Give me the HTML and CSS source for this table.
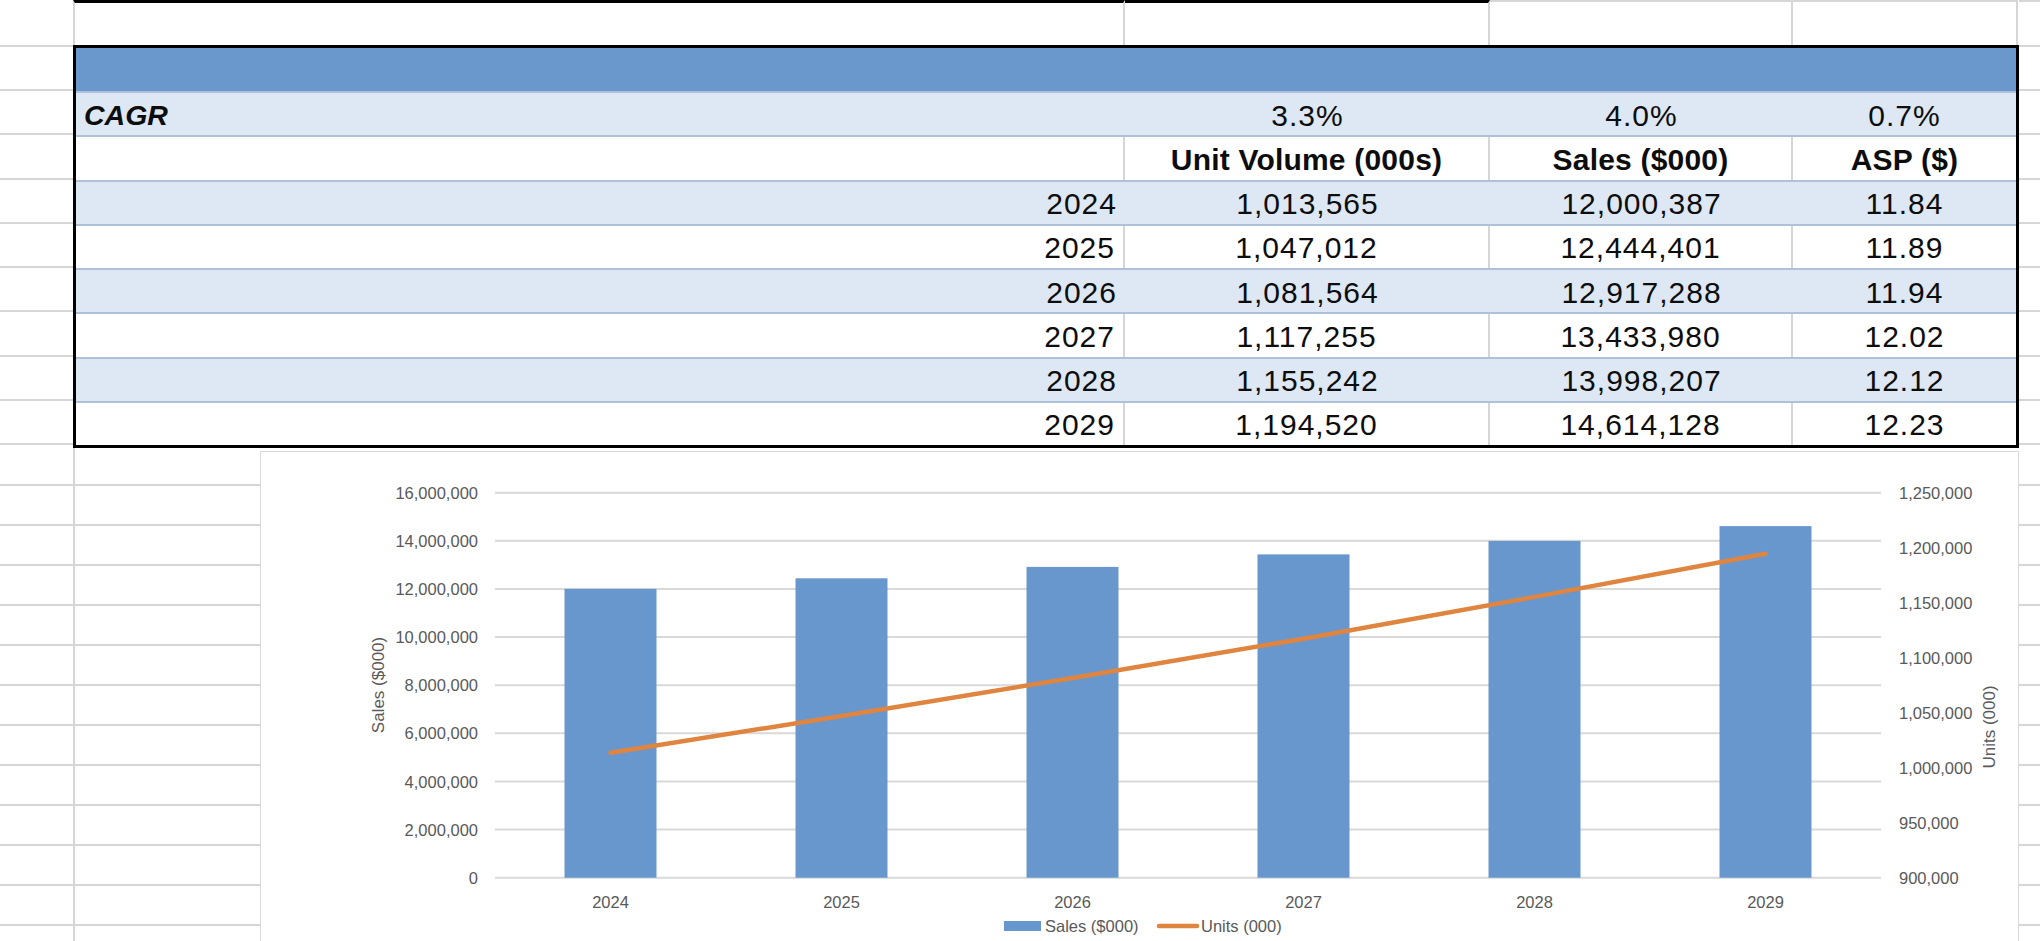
FILE: index.html
```html
<!DOCTYPE html>
<html>
<head>
<meta charset="utf-8">
<title>Sales Forecast</title>
<link rel="stylesheet" href="styles.css">
</head>
<body>
<div class="sheet">
  <div class="gutter">
    <div class="gc g-top"></div>
    <div class="gc g-band"></div>
    <div class="gc g-row"></div><div class="gc g-row"></div><div class="gc g-row"></div><div class="gc g-row"></div>
    <div class="gc g-row"></div><div class="gc g-row"></div><div class="gc g-row"></div><div class="gc g-row"></div>
    <div class="gc g-first"></div>
    <div class="gc g-low"></div><div class="gc g-low"></div><div class="gc g-low"></div><div class="gc g-low"></div>
    <div class="gc g-low"></div><div class="gc g-low"></div><div class="gc g-low"></div><div class="gc g-low"></div>
    <div class="gc g-low"></div><div class="gc g-low"></div><div class="gc g-low"></div><div class="gc g-low"></div>
  </div>

  <div class="main">
    <div class="toprow">
      <div class="tc ta"></div>
      <div class="tc tb"></div>
      <div class="tc tcc"></div>
      <div class="tc td"></div>
    </div>

    <div class="table">
      <div class="band"></div>
      <div class="row alt">
        <div class="cell k1 cagr">CAGR</div>
        <div class="cell k2">3.3%</div>
        <div class="cell k3">4.0%</div>
        <div class="cell k4">0.7%</div>
      </div>
      <div class="row plain hdr">
        <div class="cell k1"></div>
        <div class="cell k2">Unit Volume (000s)</div>
        <div class="cell k3">Sales ($000)</div>
        <div class="cell k4">ASP ($)</div>
      </div>
      <div class="row alt">
        <div class="cell k1">2024</div>
        <div class="cell k2">1,013,565</div>
        <div class="cell k3">12,000,387</div>
        <div class="cell k4">11.84</div>
      </div>
      <div class="row plain">
        <div class="cell k1">2025</div>
        <div class="cell k2">1,047,012</div>
        <div class="cell k3">12,444,401</div>
        <div class="cell k4">11.89</div>
      </div>
      <div class="row alt">
        <div class="cell k1">2026</div>
        <div class="cell k2">1,081,564</div>
        <div class="cell k3">12,917,288</div>
        <div class="cell k4">11.94</div>
      </div>
      <div class="row plain">
        <div class="cell k1">2027</div>
        <div class="cell k2">1,117,255</div>
        <div class="cell k3">13,433,980</div>
        <div class="cell k4">12.02</div>
      </div>
      <div class="row alt">
        <div class="cell k1">2028</div>
        <div class="cell k2">1,155,242</div>
        <div class="cell k3">13,998,207</div>
        <div class="cell k4">12.12</div>
      </div>
      <div class="row plain">
        <div class="cell k1">2029</div>
        <div class="cell k2">1,194,520</div>
        <div class="cell k3">14,614,128</div>
        <div class="cell k4">12.23</div>
      </div>
    </div>

    <div class="below">
      <div class="cells">
        <div class="bc first"></div>
        <div class="bc"></div><div class="bc"></div><div class="bc"></div><div class="bc"></div>
        <div class="bc"></div><div class="bc"></div><div class="bc"></div><div class="bc"></div>
        <div class="bc"></div><div class="bc"></div><div class="bc"></div><div class="bc"></div>
      </div>
      <div class="chart">
        <svg class="plot" width="1757" height="498" viewBox="0 0 1757 498">
          <g class="grid">
            <line x1="234" x2="1620" y1="40.7" y2="40.7"/>
            <line x1="234" x2="1620" y1="88.8" y2="88.8"/>
            <line x1="234" x2="1620" y1="137" y2="137"/>
            <line x1="234" x2="1620" y1="185.1" y2="185.1"/>
            <line x1="234" x2="1620" y1="233.2" y2="233.2"/>
            <line x1="234" x2="1620" y1="281.3" y2="281.3"/>
            <line x1="234" x2="1620" y1="329.5" y2="329.5"/>
            <line x1="234" x2="1620" y1="377.6" y2="377.6"/>
            <line x1="234" x2="1620" y1="425.7" y2="425.7"/>
          </g>
          <g class="bars">
            <rect x="303.5" y="136.9" width="92" height="288.8"/>
            <rect x="534.5" y="126.3" width="92" height="299.4"/>
            <rect x="765.5" y="114.9" width="92" height="310.8"/>
            <rect x="996.5" y="102.4" width="92" height="323.3"/>
            <rect x="1227.5" y="88.9" width="92" height="336.8"/>
            <rect x="1458.5" y="74.1" width="92" height="351.6"/>
          </g>
          <polyline class="units" points="349.5,300.8 580.5,264 811.5,226 1042.5,186.7 1273.5,144.9 1504.5,101.7"/>
          <g class="lbl left">
            <text x="217" y="46.7">16,000,000</text>
            <text x="217" y="94.8">14,000,000</text>
            <text x="217" y="143">12,000,000</text>
            <text x="217" y="191.1">10,000,000</text>
            <text x="217" y="239.2">8,000,000</text>
            <text x="217" y="287.3">6,000,000</text>
            <text x="217" y="335.5">4,000,000</text>
            <text x="217" y="383.6">2,000,000</text>
            <text x="217" y="431.7">0</text>
          </g>
          <g class="lbl right">
            <text x="1638" y="46.7">1,250,000</text>
            <text x="1638" y="101.7">1,200,000</text>
            <text x="1638" y="156.7">1,150,000</text>
            <text x="1638" y="211.7">1,100,000</text>
            <text x="1638" y="266.7">1,050,000</text>
            <text x="1638" y="321.7">1,000,000</text>
            <text x="1638" y="376.7">950,000</text>
            <text x="1638" y="431.7">900,000</text>
          </g>
          <g class="lbl mid">
            <text x="349.5" y="456">2024</text>
            <text x="580.5" y="456">2025</text>
            <text x="811.5" y="456">2026</text>
            <text x="1042.5" y="456">2027</text>
            <text x="1273.5" y="456">2028</text>
            <text x="1504.5" y="456">2029</text>
          </g>
          <text class="lbl title" transform="translate(123,233) rotate(-90)">Sales ($000)</text>
          <text class="lbl title" transform="translate(1734,275) rotate(-90)">Units (000)</text>
          <g class="legend">
            <rect class="sw" x="743" y="469" width="37" height="10"/>
            <text class="lbl" x="784" y="480">Sales ($000)</text>
            <line class="lsw" x1="898" x2="936" y1="474" y2="474"/>
            <text class="lbl" x="940" y="480">Units (000)</text>
          </g>
        </svg>
      </div>
    </div>
  </div>

  <div class="gutter right">
    <div class="gc g-top"></div>
    <div class="gc g-band"></div>
    <div class="gc g-row"></div><div class="gc g-row"></div><div class="gc g-row"></div><div class="gc g-row"></div>
    <div class="gc g-row"></div><div class="gc g-row"></div><div class="gc g-row"></div><div class="gc g-row"></div>
    <div class="gc g-first"></div>
    <div class="gc g-low"></div><div class="gc g-low"></div><div class="gc g-low"></div><div class="gc g-low"></div>
    <div class="gc g-low"></div><div class="gc g-low"></div><div class="gc g-low"></div><div class="gc g-low"></div>
    <div class="gc g-low"></div><div class="gc g-low"></div><div class="gc g-low"></div><div class="gc g-low"></div>
  </div>
</div>
</body>
</html>
```

FILE: styles.css
```css
* { box-sizing: border-box; margin: 0; padding: 0; }

html, body {
  width: 2040px;
  height: 941px;
  overflow: hidden;
  background: #ffffff;
}

body {
  font-family: "Liberation Sans", Arial, sans-serif;
  color: #0d0d0d;
}

.sheet {
  display: flex;
  width: 2040px;
  height: 941px;
}

/* spreadsheet gutters */
.gutter {
  width: 73px;
  flex: none;
  display: flex;
  flex-direction: column;
}
.gutter.right { width: 21px; }
.gc { flex: none; border-bottom: 2px solid #d6d6d6; }
.g-top { height: 47px; }
.g-band { height: 44px; }
.g-row { height: 44.25px; }
.g-first { height: 41px; }
.g-low { height: 40px; }
.gutter.right .g-top { border-top: 2px solid #d6d6d6; }

.main {
  width: 1946px;
  flex: none;
  display: flex;
  flex-direction: column;
}

/* row above the table */
.toprow {
  display: flex;
  height: 45px;
  flex: none;
}
.tc { border-right: 2px solid #d6d6d6; }
.ta { width: 1052px; border-left: 2px solid #d6d6d6; border-top: 3px solid #000; }
.tb { width: 365px; border-top: 3px solid #000; }
.tcc { width: 303px; border-top: 2px solid #d6d6d6; }
.td { width: 225px; border-top: 2px solid #d6d6d6; }

/* data table */
.table {
  flex: none;
  border: 3px solid #000;
  display: flex;
  flex-direction: column;
}
.band {
  height: 43px;
  background: #6a98cd;
}
.row {
  display: flex;
  height: 44.25px;
  border-top: 2px solid #adc2da;
  font-size: 30px;
}
.row.alt { background: #dde8f4; }
.cell {
  display: flex;
  align-items: center;
  justify-content: center;
  letter-spacing: 1px;
  padding-top: 3px;
  white-space: nowrap;
}
.k1 { width: 1049px; justify-content: flex-end; padding-right: 8px; }
.k2 { width: 365px; }
.k3 { width: 303px; }
.k4 { flex: 1; }
.row.plain .k1, .row.plain .k2, .row.plain .k3 { border-right: 2px solid #d6d6d6; }
.cagr {
  justify-content: flex-start;
  padding-left: 8px;
  font-size: 28.5px;
  font-weight: bold;
  font-style: italic;
  letter-spacing: 0;
}
.hdr .cell { font-weight: bold; letter-spacing: 0.2px; }

/* area below the table */
.below {
  flex: 1;
  display: flex;
  align-items: flex-start;
}
.cells {
  width: 187px;
  flex: none;
  align-self: stretch;
  border-left: 2px solid #d6d6d6;
  display: flex;
  flex-direction: column;
}
.bc { flex: none; height: 40px; border-bottom: 2px solid #d6d6d6; }
.bc.first { height: 38px; }

.chart {
  flex: none;
  margin-top: 3px;
  width: 1759px;
  height: 500px;
  border: 1px solid #d9d9d9;
  background: #fff;
}
.plot { display: block; }
.grid line { stroke: #d9d9d9; stroke-width: 2; }
.bars rect { fill: #6897ce; }
.units { fill: none; stroke: #e0853f; stroke-width: 4.5; stroke-linejoin: round; stroke-linecap: round; }
.lbl {
  font-family: "Liberation Sans", Arial, sans-serif;
  font-size: 16.5px;
  fill: #595959;
}
.lbl.left text { text-anchor: end; }
.lbl.mid text { text-anchor: middle; }
.lbl.title { text-anchor: middle; font-size: 17px; }
.legend .sw { fill: #6897ce; }
.legend .lsw { stroke: #e0853f; stroke-width: 4.5; stroke-linecap: round; }
```
